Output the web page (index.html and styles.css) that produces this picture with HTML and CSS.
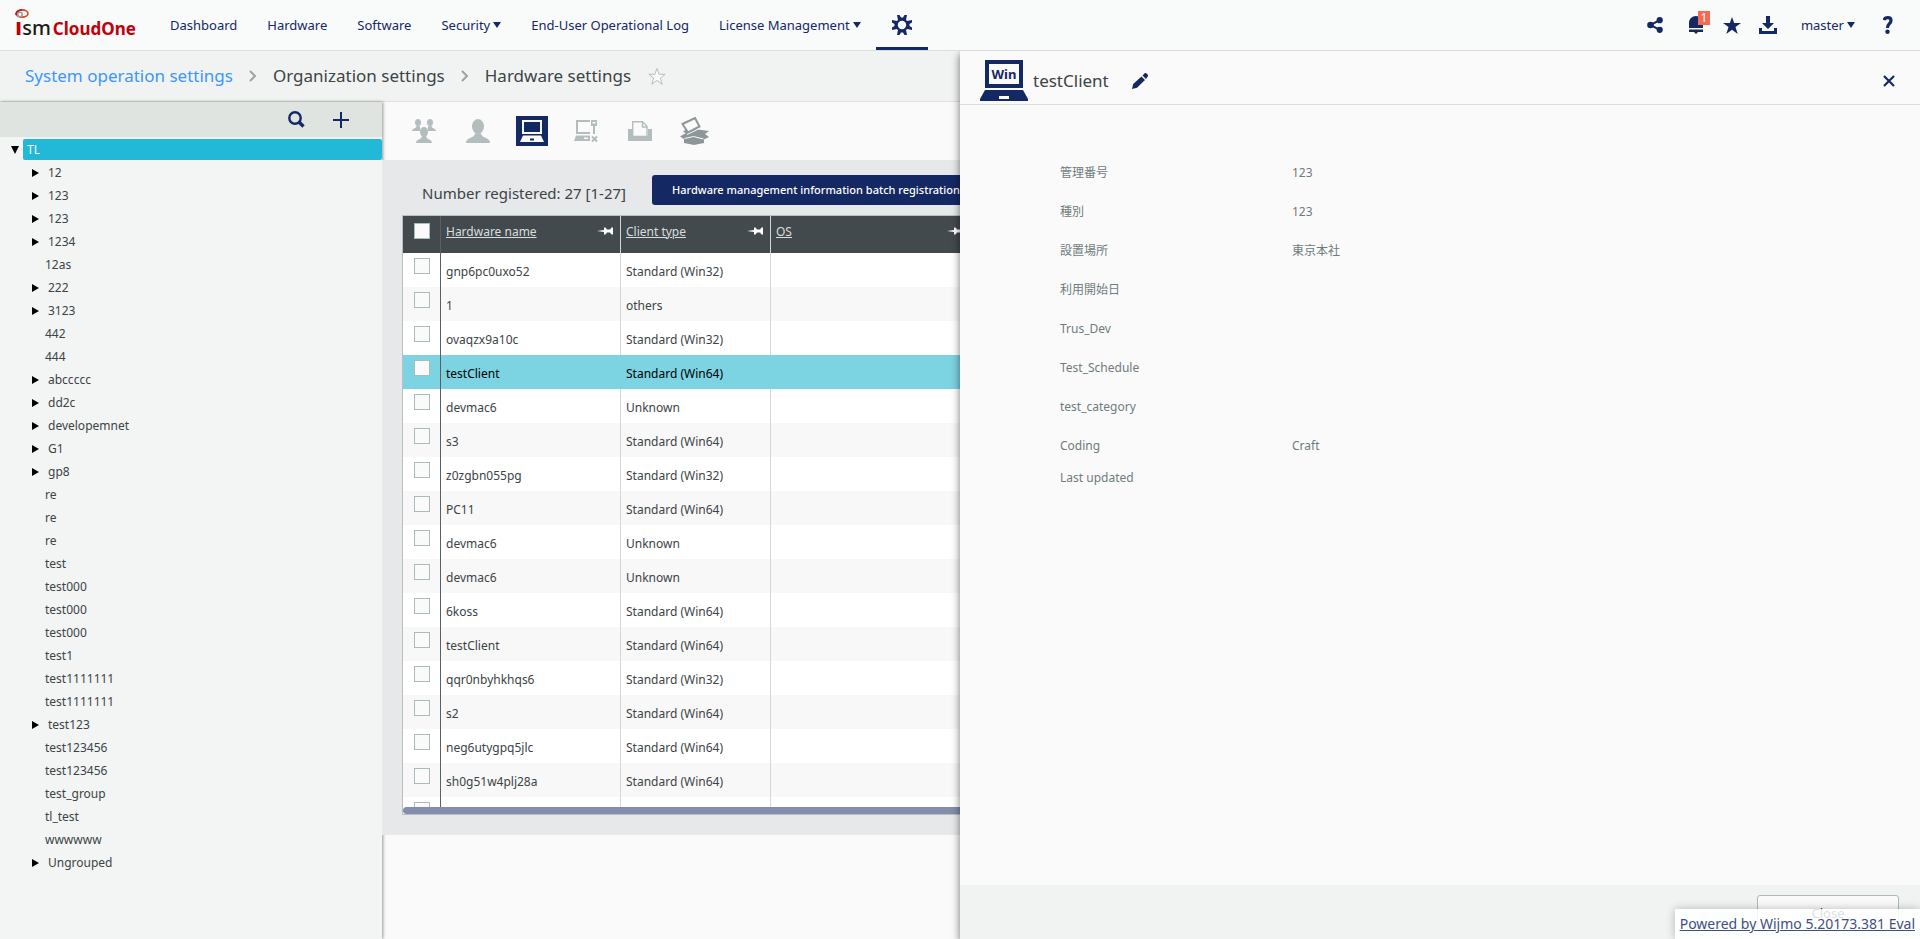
FILE: index.html
```html
<!DOCTYPE html>
<html lang="en">
<head>
<meta charset="utf-8">
<title>ISM CloudOne - Hardware settings</title>
<link rel="stylesheet" href="styles.css">
</head>
<body>
<svg class="defs" aria-hidden="true">
  <symbol id="pin" viewBox="0 0 16 8"><path d="M0 4 7 3V.500h1.500L10 2.500h3l1.500-2H16v7h-1.500L13 5.500h-3L8.500 7.500H7V5z"/></symbol>
  <symbol id="chev" viewBox="0 0 8 14"><path d="M1 2l5 5-5 5" fill="none" stroke="#9aa4a6" stroke-width="2"/></symbol>
</svg>
<div class="app">
  <header class="topbar">
    <a class="logo" href="#">
      <svg class="swirl" viewBox="0 0 14 9"><ellipse cx="7" cy="4.500" rx="6" ry="3.600" fill="none" stroke="#d8432a" stroke-width="1.600"/><path d="M1 6C1 3 4 1 7 1" fill="none" stroke="#b01812" stroke-width="1.600"/><circle cx="5" cy="5.500" r="2.200" fill="#fff" stroke="#9a9a9a" stroke-width="1.500"/></svg>
      <span class="logo-i">ı</span><span class="logo-sm">sm</span><span class="logo-name">CloudOne</span>
    </a>
    <nav class="nav">
      <a href="#">Dashboard</a><a href="#">Hardware</a><a href="#">Software</a>
      <a href="#">Security<i class="caret"></i></a><a href="#">End-User Operational Log</a>
      <a href="#">License Management<i class="caret"></i></a>
      <a class="gear" href="#" aria-label="Settings"><svg width="20" height="20" viewBox="0 0 20 20"><g fill="#142864"><path d="M5 0h2.500L9 2.500h2L12.500 0H15l-1 5H6z"/><path d="M5 20h2.500L9 17.500h2l1.500 2.500H15l-1-5H6z"/><path d="M0 5v2.500L2.500 9v2L0 12.500V15l5-1V6z"/><path d="M20 5v2.500L17.500 9v2l2.500 1.500V15l-5-1V6z"/><circle cx="10" cy="10" r="6.500"/></g><circle cx="10" cy="10" r="4.200" fill="#f9fafa"/></svg></a>
    </nav>
    <div class="tools">
      <button class="ico share" aria-label="Share"><svg width="16" height="16" viewBox="0 0 16 16"><g fill="#142864"><circle cx="3.500" cy="8" r="3.300"/><circle cx="12.700" cy="3.200" r="3.100"/><circle cx="12.700" cy="12.800" r="3.100"/></g><path d="M12.700 3.200 3.500 8l9.200 4.800" fill="none" stroke="#142864" stroke-width="2"/></svg></button>
      <button class="ico" aria-label="Notifications"><svg width="14" height="18" viewBox="0 0 14 18"><path d="M0 12V7c0-4 3-7 7-7s7 3 7 7v5zM0 13.500h14V16H9l-2 2-2-2H0z" fill="#142864"/></svg><span class="badge">1</span></button>
      <button class="ico" aria-label="Favourites"><svg width="18" height="17" viewBox="0 0 18 17"><path d="M9 0l2.200 6H18l-5.500 4 2.200 7L9 12.800 3.300 17l2.200-7L0 6h6.800z" fill="#142864"/></svg></button>
      <button class="ico" aria-label="Download"><svg width="18" height="18" viewBox="0 0 18 18"><path d="M7 0h4v7h4l-6 6-6-6h4zM0 12h3v3h12v-3h3v6H0z" fill="#142864"/></svg></button>
      <button class="user">master<i class="caret"></i></button>
      <button class="ico help" aria-label="Help"><svg width="10" height="18" viewBox="0 0 10 18"><path d="M1 4C2 1 8 .500 8 4.500 8 8 4.500 7.500 4.500 12" fill="none" stroke="#142864" stroke-width="3.200"/><circle cx="4.500" cy="15.800" r="2.200" fill="#142864"/></svg></button>
    </div>
  </header>

  <div class="crumbs">
    <a href="#">System operation settings</a><svg width="8" height="14"><use href="#chev"/></svg>
    <span>Organization settings</span><svg width="8" height="14"><use href="#chev"/></svg>
    <span>Hardware settings</span>
    <svg width="20" height="19" viewBox="0 0 20 19"><path d="M10 1.500l2.200 5.800h6l-4.900 3.800 1.900 6.200-5.200-3.900-5.200 3.900 1.900-6.200-4.900-3.800h6z" fill="#fafafa" stroke="#b4bfc2"/></svg>
  </div>

  <div class="work">
    <aside class="side">
      <div class="side-tools">
        <button aria-label="Search"><svg width="17" height="17" viewBox="0 0 17 17"><circle cx="7" cy="7" r="5.700" fill="none" stroke="#142864" stroke-width="2.400"/><path d="M11 11l4.500 4.500" stroke="#142864" stroke-width="3.400"/></svg></button>
        <button aria-label="Add"><svg width="16" height="16" viewBox="0 0 16 16"><path d="M8 0v16M0 8h16" stroke="#142864" stroke-width="2"/></svg></button>
      </div>
      <div class="root"><i class="open"></i><a href="#">TL</a></div>
      <ul class="tree">
        <li class="sub">12</li><li class="sub">123</li><li class="sub">123</li><li class="sub">1234</li><li>12as</li>
        <li class="sub">222</li><li class="sub">3123</li><li>442</li><li>444</li><li class="sub">abccccc</li>
        <li class="sub">dd2c</li><li class="sub">developemnet</li><li class="sub">G1</li><li class="sub">gp8</li>
        <li>re</li><li>re</li><li>re</li><li>test</li><li>test000</li><li>test000</li><li>test000</li><li>test1</li>
        <li>test1111111</li><li>test1111111</li><li class="sub">test123</li><li>test123456</li><li>test123456</li>
        <li>test_group</li><li>tl_test</li><li>wwwwww</li><li class="sub">Ungrouped</li>
      </ul>
    </aside>

    <main class="main">
      <div class="modes">
        <button aria-label="Groups"><svg width="24" height="24" viewBox="0 0 24 24" fill="#b4bdbe"><ellipse cx="6" cy="3.500" rx="3" ry="3.500"/><path d="M0 12c0-3 4-2 4.500-5h3C8 9 9 9 8 12z"/><ellipse cx="18" cy="3.500" rx="3" ry="3.500"/><path d="M24 12c0-3-4-2-4.500-5h-3c-.500 2-1.500 2-.500 5z"/><ellipse cx="12" cy="13" rx="4" ry="5"/><path d="M4 24c0-4 5.500-3 6-7h4c.500 4 6 3 6 7z"/></svg></button>
        <button aria-label="Users"><svg width="24" height="24" viewBox="0 0 24 24" fill="#b4bdbe"><ellipse cx="12" cy="7.500" rx="6" ry="7.500"/><path d="M0 24c0-6 8-4 9-9.500h6C16 20 24 18 24 24z"/></svg></button>
        <button class="on" aria-label="Hardware"><svg width="24" height="22" viewBox="0 0 24 22"><path d="M2 0h20v14H2z" fill="#fafafa"/><path d="M4 2h16v10H4z" fill="#142864"/><path d="M3 15.500h18l3 6.500H0z" fill="#fafafa"/><path d="M10 18.500h4v2h-4z" fill="#142864"/></svg></button>
        <button aria-label="Device"><svg width="24" height="24" viewBox="0 0 24 24"><path d="M16 2H3v12h13" fill="none" stroke="#b4bdbe" stroke-width="2"/><path d="M2 16.500h14V22H0zM17 1h6v6h-2v8h-2V7h-2z" fill="#b4bdbe"/><path d="M18.500 3h3v1.500h-3z" fill="#fafafa"/><path d="M10 18.500h4v1.500h-4z" fill="#fafafa"/><path d="M18 17.500l5 5M23 17.500l-5 5" stroke="#b4bdbe" stroke-width="2"/></svg></button>
        <button aria-label="Printer"><svg width="24" height="20" viewBox="0 0 24 20"><path d="M0 8h4v7h16V8h4v12H0z" fill="#b4bdbe"/><path d="M4.700 15.500V.700h9.800l4.500 4.500v10.300z" fill="#fafafa" stroke="#b4bdbe" stroke-width="1.400"/><path d="M14.500 1v5h4.500" fill="none" stroke="#b4bdbe" stroke-width="1.400"/></svg></button>
        <button aria-label="Assets"><svg width="30" height="28" viewBox="0 0 30 28"><path d="M1 19.500 7 16l-3-1 4-4 22 3-4 3 4 3-5 2.500V26l-10 2-10-2v-4z" fill="#8d9799"/><path d="M3.500 7 16 1l4.500 8.500L9 15.500z" fill="#fafafa" stroke="#8d9799" stroke-width="2"/><path d="M8 17.500 21.500 11M5.500 21.500l9-2 10 2.500" fill="none" stroke="#fafafa"/></svg></button>
      </div>
      <section class="listing">
        <div class="summary"><h1>Number registered: 27 [1-27]</h1><button class="batch">Hardware management information batch registration</button></div>
        <div class="grid">
          <div class="grid-view">
          <table>
            <colgroup><col class="c0"><col class="c1"><col class="c2"><col class="c3"><col></colgroup>
            <thead><tr><th><input type="checkbox" aria-label="Select all"></th>
              <th><a href="#">Hardware name</a><svg width="16" height="8"><use href="#pin"/></svg></th>
              <th><a href="#">Client type</a><svg width="16" height="8"><use href="#pin"/></svg></th>
              <th><a href="#">OS</a><svg width="16" height="8"><use href="#pin"/></svg></th><th></th></tr></thead>
            <tbody>
              <tr><td><input type="checkbox" aria-label="Select row"></td><td>gnp6pc0uxo52</td><td>Standard (Win32)</td><td></td><td></td></tr>
              <tr><td><input type="checkbox" aria-label="Select row"></td><td>1</td><td>others</td><td></td><td></td></tr>
              <tr><td><input type="checkbox" aria-label="Select row"></td><td>ovaqzx9a10c</td><td>Standard (Win32)</td><td></td><td></td></tr>
              <tr class="sel"><td><input type="checkbox" aria-label="Select row"></td><td>testClient</td><td>Standard (Win64)</td><td></td><td></td></tr>
              <tr><td><input type="checkbox" aria-label="Select row"></td><td>devmac6</td><td>Unknown</td><td></td><td></td></tr>
              <tr><td><input type="checkbox" aria-label="Select row"></td><td>s3</td><td>Standard (Win64)</td><td></td><td></td></tr>
              <tr><td><input type="checkbox" aria-label="Select row"></td><td>z0zgbn055pg</td><td>Standard (Win32)</td><td></td><td></td></tr>
              <tr><td><input type="checkbox" aria-label="Select row"></td><td>PC11</td><td>Standard (Win64)</td><td></td><td></td></tr>
              <tr><td><input type="checkbox" aria-label="Select row"></td><td>devmac6</td><td>Unknown</td><td></td><td></td></tr>
              <tr><td><input type="checkbox" aria-label="Select row"></td><td>devmac6</td><td>Unknown</td><td></td><td></td></tr>
              <tr><td><input type="checkbox" aria-label="Select row"></td><td>6koss</td><td>Standard (Win64)</td><td></td><td></td></tr>
              <tr><td><input type="checkbox" aria-label="Select row"></td><td>testClient</td><td>Standard (Win64)</td><td></td><td></td></tr>
              <tr><td><input type="checkbox" aria-label="Select row"></td><td>qqr0nbyhkhqs6</td><td>Standard (Win32)</td><td></td><td></td></tr>
              <tr><td><input type="checkbox" aria-label="Select row"></td><td>s2</td><td>Standard (Win64)</td><td></td><td></td></tr>
              <tr><td><input type="checkbox" aria-label="Select row"></td><td>neg6utygpq5jlc</td><td>Standard (Win64)</td><td></td><td></td></tr>
              <tr><td><input type="checkbox" aria-label="Select row"></td><td>sh0g51w4plj28a</td><td>Standard (Win64)</td><td></td><td></td></tr>
              <tr><td><input type="checkbox" aria-label="Select row"></td><td></td><td></td><td></td><td></td></tr>
            </tbody>
          </table>
          </div>
          <div class="hbar"></div>
        </div>
      </section>
    </main>
  </div>

  <section class="panel">
    <div class="panel-head">
      <svg width="48" height="41" viewBox="0 0 48 41"><path d="M5 0h38v28H5z" fill="#142864"/><path d="M9 4h30v20H9z" fill="#fafafa"/><path d="M5 30h38l5 9v2H0v-2z" fill="#142864"/><path d="M19 36h10v3H19z" fill="#fafafa"/><text x="24" y="19" text-anchor="middle" class="win">Win</text></svg>
      <h2>testClient</h2>
      <button class="ico edit" aria-label="Edit"><svg width="16" height="16" viewBox="0 0 16 16" fill="#142864"><path d="M0 16l1.200-5L9.500 3.500l3.500 3.500L5 14.800zM10.500 2.500 13 0h1l2 2v1l-2 3z"/></svg></button>
      <button class="ico close" aria-label="Close panel"><svg width="12" height="12" viewBox="0 0 12 12"><path d="M1 1l10 10M11 1 1 11" stroke="#142864" stroke-width="2.200"/></svg></button>
    </div>
    <dl class="fields" lang="ja">
      <div><dt>管理番号</dt><dd>123</dd></div>
      <div><dt>種別</dt><dd>123</dd></div>
      <div><dt>設置場所</dt><dd>東京本社</dd></div>
      <div><dt>利用開始日</dt><dd></dd></div>
      <div><dt>Trus_Dev</dt><dd></dd></div>
      <div><dt>Test_Schedule</dt><dd></dd></div>
      <div><dt>test_category</dt><dd></dd></div>
      <div><dt>Coding</dt><dd>Craft</dd></div>
      <div class="last"><dt>Last updated</dt><dd></dd></div>
    </dl>
    <div class="panel-foot"><button class="close-btn">Close</button></div>
  </section>
  <a class="wijmo" href="#">Powered by Wijmo 5.20173.381 Eval</a>
</div>
</body>
</html>
```
FILE: styles.css
```css
* { box-sizing: border-box; }
body { margin: 0; font: 12px/16px "Noto Sans", "Noto Sans CJK JP", sans-serif; color: #3c4446; background: #fafafa; }
button { border: 0; padding: 0; background: none; font: inherit; color: inherit; }
a { color: inherit; text-decoration: none; }
svg { display: block; flex: none; }
.defs { position: absolute; width: 0; height: 0; }
.app { position: relative; display: flex; flex-direction: column; height: 100vh; overflow: hidden; }

.topbar { display: flex; height: 51px; flex: none; background: #f9fafa; border-bottom: 1px solid #d9dfdd; color: #142864; font-size: 13px; }
.logo { position: relative; width: 155px; padding: 14px 0 0 15px; display: flex; align-items: baseline; line-height: 24px; font-weight: 700; white-space: nowrap; }
.swirl { position: absolute; left: 15px; top: 9px; width: 14px; height: 9px; }
.logo-i { color: #c1000b; font-size: 24px; }
.logo-sm { color: #231815; font-size: 20px; font-weight: 500; }
.logo-name { color: #c1000b; font-size: 17px; margin-left: 2px; }
.nav { display: flex; }
.nav a { display: flex; align-items: center; padding: 0 15px; white-space: nowrap; }
.caret { border: 4px solid transparent; border-top: 6px solid #142864; border-bottom: 0; margin-left: 3px; }
.nav .gear { width: 52px; padding: 3px 0 0; justify-content: center; border-bottom: 3px solid #142864; }
.tools { margin-left: auto; display: flex; padding-right: 14px; }
.ico { position: relative; width: 36px; display: flex; align-items: center; justify-content: center; }
.share { margin-right: 5px; }
.badge { position: absolute; left: 20px; top: 11px; width: 12px; height: 14px; background: #f9694f; color: #fff; font-size: 12px; line-height: 14px; }
.user { display: flex; align-items: center; padding: 0 15px; }

.crumbs { display: flex; flex: none; align-items: center; gap: 16px; height: 51px; padding-left: 25px; background: #f1f3f3; border-bottom: 1px solid #dde1df; font-size: 17px; line-height: 24px; white-space: nowrap; }
.crumbs a { color: #3c96ff; }

.work { display: flex; flex: 1; min-height: 0; }
.side { position: relative; z-index: 1; width: 382px; flex: none; background: #f2f5f4; box-shadow: 1px 0 3px rgba(0,0,0,.4); }
.side-tools { display: flex; justify-content: flex-end; align-items: center; gap: 28px; height: 35px; padding-right: 33px; background: #e0e4e1; }
.root { display: flex; align-items: center; padding: 2px 0 0 11px; }
.root a { flex: 1; margin-left: 4px; padding-left: 4px; height: 21px; line-height: 21px; background: #22b8d8; color: #fff; border-radius: 2px; }
.open { border: 4px solid transparent; border-top: 8px solid #000; border-bottom: 0; }
.tree { list-style: none; margin: 0; padding: 1px 0 0 32px; }
.tree li { display: flex; align-items: center; height: 23px; padding-left: 13px; }
.tree .sub { padding-left: 0; }
.sub::before { content: ""; border: 4px solid transparent; border-left: 7px solid #000; border-right: 0; margin-right: 9px; }

.main { flex: 1; min-width: 0; background: #fafafa; }
.modes { display: flex; align-items: center; gap: 22px; height: 58px; padding-left: 26px; }
.modes button { width: 32px; height: 30px; display: flex; align-items: center; justify-content: center; }
.modes .on { background: #142864; }
.listing { position: relative; z-index: 2; background: #e6e8e9; padding: 15px 20px 20px; }
.summary { display: flex; align-items: center; gap: 26px; padding-left: 20px; height: 30px; }
.summary h1 { margin: 0; padding-top: 5px; font-size: 15px; line-height: 24px; font-weight: 400; }
.batch { height: 30px; padding: 0 20px; border-radius: 3px; background: #142864; color: #fff; font-size: 11px; font-weight: 500; }
.grid { margin-top: 10px; border: 1px solid #b9bfc1; background: #fff; }
.grid-view { height: 591px; overflow: hidden; }
.hbar { height: 7px; border-radius: 4px; background: #838eac; }
table { width: 100%; border-collapse: separate; border-spacing: 0; table-layout: fixed; }
.c0 { width: 38px; } .c1 { width: 180px; } .c2 { width: 150px; } .c3 { width: 200px; }
th, td { padding: 0 5px; border-right: 1px solid #d5d8d9; text-align: left; font-weight: 400; white-space: nowrap; }
th:first-child, td:first-child { padding: 0 11px; border-right-color: #5a5f61; }
th { position: relative; height: 37px; padding-bottom: 6px; background: #424a4d; color: #d9dddd; }
th:first-child { padding-bottom: 7px; }
th a { text-decoration: underline; }
th svg { position: absolute; right: 7px; top: 11px; fill: #fff; }
td { height: 34px; padding-top: 3px; }
tr:nth-child(even) td { background: #f8f8f8; }
tbody tr.sel td { background: #7cd3e2; color: #000; border-right-color: #7cd3e2; }
tbody tr.sel td:first-child { border-right-color: #5a5f61; }
input[type=checkbox] { appearance: none; display: block; width: 16px; height: 16px; margin: 0; border: 1px solid #abbaba; background: #fafafa; }
td input[type=checkbox] { margin-bottom: 8px; }

.panel { position: absolute; z-index: 3; left: 50%; right: 0; top: 51px; bottom: 0; display: flex; flex-direction: column; background: #fafafa; box-shadow: 0 3px 8px rgba(0,0,0,.55); clip-path: inset(0 0 0 -10px); }
.panel-head { display: flex; height: 54px; padding: 9px 13px 0 20px; border-bottom: 1px solid #d9dfdd; }
.win { font: 700 13px "Noto Sans", sans-serif; fill: #142864; }
.panel h2 { margin: 0 0 0 5px; padding-top: 9px; font-size: 17px; line-height: 24px; font-weight: 400; }
.edit { margin: 3px 0 0 13px; height: 36px; }
.close { height: 42px; margin-left: auto; }
.fields { flex: 1; margin: 0; padding: 48px 0 0 100px; color: #6f7c7d; }
.fields div { display: flex; align-items: center; height: 39px; }
.fields .last { height: 25px; }
.fields dt { width: 232px; }
.fields dd { margin: 0; }
.panel-foot { height: 54px; padding: 10px 21px; display: flex; justify-content: flex-end; background: #f1f3f3; }
.close-btn { width: 142px; height: 36px; border: 1px solid #abbaba; border-radius: 3px; background: #fafafa; color: #142864; font-size: 13px; }
.wijmo { position: absolute; z-index: 4; right: 0; bottom: 0; padding: 3px 5px; background: rgba(255,255,255,.85); box-shadow: 0 0 10px rgba(0,0,0,.25); font-size: 14px; line-height: 24px; color: #3f4f83; text-decoration: underline; }
```
